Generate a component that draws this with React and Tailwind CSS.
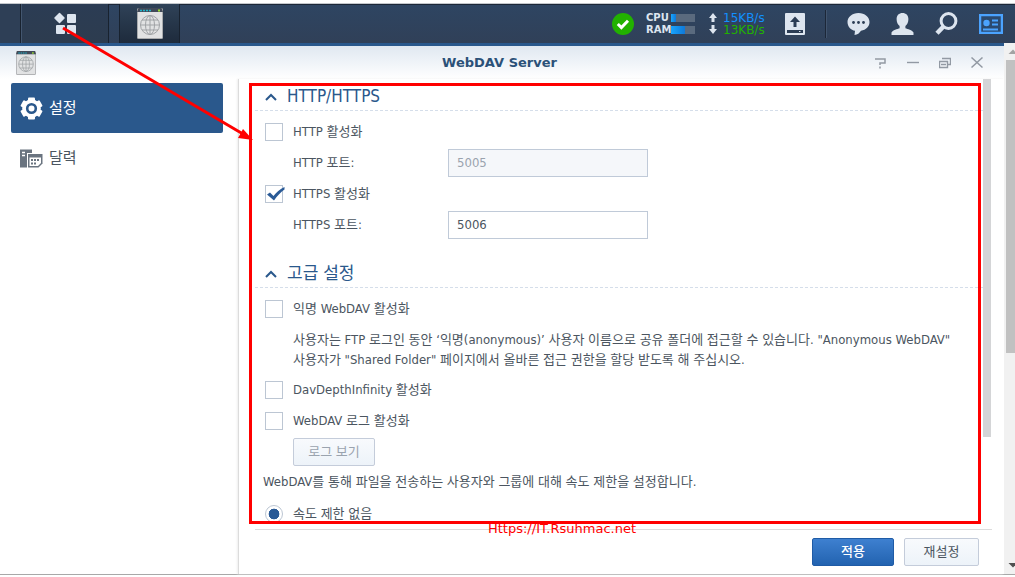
import React, { useState } from "react";

const App = () => {
  const [httpOn, setHttpOn] = useState(false);
  const [httpsOn, setHttpsOn] = useState(true);
  const [httpPort, setHttpPort] = useState("5005");
  const [httpsPort, setHttpsPort] = useState("5006");
  const [anonymous, setAnonymous] = useState(false);
  const [depthInfinity, setDepthInfinity] = useState(false);
  const [logOn, setLogOn] = useState(false);

  return (
    <div className="relative flex min-h-screen flex-col bg-white font-['DejaVu_Sans_Condensed','DejaVu_Sans','Noto_Sans_CJK_KR',sans-serif] text-[13px] text-[#4b5560]">
      <Taskbar />
      <div className="flex flex-1 border-b border-[#a8a8a8]">
        <div className="flex min-w-0 flex-1 flex-col border-t-3 border-[#2a588c]">
          <TitleBar />
          <div className="flex flex-1">
            <Sidebar />
            <main className="flex min-w-0 flex-1 flex-col border-l border-[#dcdcdc] pl-4 shadow-[-1px_0_2px_#eeeeee]">
              <div className="relative flex flex-1">
                <div className="min-w-0 flex-1 pt-1">
                  <Section title="HTTP/HTTPS">
                    <Check
                      label="HTTP 활성화"
                      checked={httpOn}
                      onChange={setHttpOn}
                    />
                    <Port
                      id="http-port"
                      label="HTTP 포트:"
                      value={httpPort}
                      onChange={setHttpPort}
                      disabled={!httpOn}
                    />
                    <Check
                      label="HTTPS 활성화"
                      checked={httpsOn}
                      onChange={setHttpsOn}
                    />
                    <Port
                      id="https-port"
                      label="HTTPS 포트:"
                      value={httpsPort}
                      onChange={setHttpsPort}
                      disabled={!httpsOn}
                    />
                  </Section>
                  <div className="h-5" />
                  <Section title="고급 설정">
                    <Check
                      label="익명 WebDAV 활성화"
                      checked={anonymous}
                      onChange={setAnonymous}
                    />
                    <p className="mt-1.5 mb-1 pr-3 pl-[38px] leading-5 break-keep">
                      사용자는 FTP 로그인 동안 ‘익명(anonymous)’ 사용자 이름으로
                      공유 폴더에 접근할 수 있습니다. "Anonymous WebDAV" 사용자가
                      "Shared Folder" 페이지에서 올바른 접근 권한을 할당 받도록 해
                      주십시오.
                    </p>
                    <Check
                      label="DavDepthInfinity 활성화"
                      checked={depthInfinity}
                      onChange={setDepthInfinity}
                    />
                    <Check
                      label="WebDAV 로그 활성화"
                      checked={logOn}
                      onChange={setLogOn}
                    />
                    <button
                      disabled={!logOn}
                      className="mt-0.5 ml-[38px] block h-7 w-[82px] rounded-xs border border-[#c4ccda] bg-linear-to-b from-[#f8fafd] to-[#edf3f9] text-[#4b5560] disabled:text-[#9aa3ae]"
                    >
                      로그 보기
                    </button>
                    <p className="pl-2 leading-8">
                      WebDAV를 통해 파일을 전송하는 사용자와 그룹에 대해 속도
                      제한을 설정합니다.
                    </p>
                    <label className="flex h-[31px] items-center gap-2.5 pl-2.5">
                      <input
                        type="radio"
                        name="speed"
                        defaultChecked
                        className="size-[18px] appearance-none rounded-full border border-[#bcc6d3] bg-white checked:bg-radial checked:from-[#2a5a96] checked:from-45% checked:to-white checked:to-50%"
                      />
                      속도 제한 없음
                    </label>
                  </Section>
                </div>
                <div className="mr-[13px] w-2">
                  <div className="h-[358px] bg-[#d4d5d7]" />
                </div>
                <span className="absolute -bottom-2.5 left-[233px] font-['DejaVu_Sans',sans-serif] text-[13px] leading-5 text-[#f00]">
                  Https://IT.Rsuhmac.net
                </span>
                <div className="pointer-events-none absolute top-1 -left-1.5 right-[23px] bottom-[5px] border-3 border-[#f00]" />
              </div>
              <footer className="mr-3 flex justify-end gap-2.5 border-t border-[#dcdcdc] py-2 pr-[13px]">
                <button className="h-7 w-[82px] rounded-xs border border-[#1f5ba6] bg-linear-to-b from-[#3e80d0] to-[#2263b0] font-medium text-white">
                  적용
                </button>
                <button className="h-7 w-[75px] rounded-xs border border-[#c4ccda] bg-linear-to-b from-[#f8fafd] to-[#edf3f9]">
                  재설정
                </button>
              </footer>
            </main>
          </div>
        </div>
        <PageScrollbar />
      </div>
      <div className="h-0.5" />
      <Arrow />
    </div>
  );
};

function Taskbar() {
  return (
    <header className="flex h-[43px] border-t-3 border-white bg-[#2f435f]">
      <div className="flex flex-1 border-t border-[#c4c8cd] bg-linear-to-b from-[#2e4562] to-[#304058] shadow-[inset_0_1px_#1c2738]">
        <div className="w-[21px] border-r border-[#18222f] bg-[#2e3f56]" />
        <button
          aria-label="메인 메뉴"
          className="flex w-[88px] items-center justify-center border-x border-[#43566f] border-r-[#18222f] bg-linear-to-b from-[#2b3c54] to-[#2d3c4f]"
        >
          <svg width="24" height="24" viewBox="0 0 24 24" fill="#dde5ef">
            <path
              d="M6.500 1.500 11 6 6.500 10.500 2 6Z"
              stroke="#dde5ef"
              strokeWidth="1.500"
              strokeLinejoin="round"
            />
            <rect x="14" y="2" width="9" height="9" rx="1" />
            <rect x="3" y="13" width="9" height="9" rx="1" />
            <rect x="14" y="13" width="9" height="9" rx="1" />
          </svg>
        </button>
        <div className="w-2.5" />
        <button
          aria-label="WebDAV"
          className="flex w-[61px] items-center justify-center border-x border-[#18222f] bg-linear-to-b from-[#2f4258] to-[#1e2b3c]"
        >
          <ServerIcon className="h-[31px] w-[26px]" />
        </button>
        <div className="flex flex-1 items-center justify-end pr-3">
          <svg width="22" height="22" viewBox="0 0 22 22">
            <circle cx="11" cy="11" r="11" fill="#22b100" />
            <path
              d="m5.8 11 3.6 3.6 6.6-6.8"
              fill="none"
              stroke="#fff"
              strokeWidth="3"
            />
          </svg>
          <div className="ml-3 w-[49px] font-['DejaVu_Sans',sans-serif] text-[10px] leading-3 font-bold text-[#dde5ef]">
            <Meter name="CPU" percent={20} />
            <Meter name="RAM" percent={58} />
          </div>
          <div className="ml-3.5 font-['DejaVu_Sans',sans-serif] text-xs leading-3">
            <div className="flex items-center gap-1.5 text-[#1290ff]">
              <SmallArrow />
              <span className="w-[43px]">15KB/s</span>
            </div>
            <div className="flex items-center gap-1.5 text-[#22b100]">
              <SmallArrow down />
              <span className="w-[43px]">13KB/s</span>
            </div>
          </div>
          <svg
            width="20"
            height="22"
            viewBox="0 0 20 22"
            className="ml-[19px]"
          >
            <rect width="20" height="22" rx="1" fill="#dde5ef" />
            <path
              d="M10 3.500 15 9h-3.500v5h-3V9H5ZM2 17h16v3H2Z"
              fill="#2b3c54"
            />
            <path d="M14 18h1.500v1H14z" fill="#dde5ef" />
          </svg>
          <div className="mx-5 h-7 w-0.5 border-l border-[#1c2738] bg-[#41546e]" />
          <div className="flex items-center gap-[21px]">
            <svg width="23" height="22" viewBox="0 0 23 22">
              <path
                d="M11.500 0C5.200 0 .5 4 .5 9s3.500 8 7.500 8.800L7.500 22c3 0 5-2 6.500-4.200 5-.8 8.500-4.300 8.500-8.800 0-5-4.700-9-11-9Z"
                fill="#dde5ef"
              />
              <g fill="#2b3c54">
                <circle cx="6.500" cy="9.500" r="1.400" />
                <circle cx="11.500" cy="9.500" r="1.400" />
                <circle cx="16.500" cy="9.500" r="1.400" />
              </g>
            </svg>
            <svg width="23" height="22" viewBox="0 0 23 22" fill="#dde5ef">
              <path d="M11.500 0C8 0 5.600 2.200 5.600 6c0 3.200 1.200 5.500 3 7v2.200c-2 1-7.100 1.600-8.100 4.300V22h22v-2.500c-1-2.700-6.100-3.300-8.100-4.300V13c1.800-1.500 3-3.800 3-7 0-3.800-2.400-6-5.900-6Z" />
            </svg>
            <svg
              width="23"
              height="23"
              viewBox="0 0 23 23"
              fill="none"
              stroke="#dde5ef"
            >
              <circle cx="13.500" cy="9" r="7.400" strokeWidth="3" />
              <path d="m8.500 14.500-6.500 6.700" strokeWidth="4.500" />
            </svg>
            <svg width="24" height="20" viewBox="0 0 24 20" fill="none">
              <rect
                x="1"
                y="1"
                width="22"
                height="18"
                fill="#2b4a70"
                stroke="#4ba3ff"
                strokeWidth="2.500"
              />
              <circle cx="7.500" cy="9" r="3.200" fill="#4ba3ff" />
              <path
                d="M13 6.500h6M13 10.500h6M4 15.500h15"
                stroke="#4ba3ff"
                strokeWidth="2"
              />
            </svg>
          </div>
        </div>
      </div>
    </header>
  );
}

function Meter({ name, percent }) {
  return (
    <div className="flex items-center">
      <span className="w-[25px]">{name}</span>
      <div className="h-2 flex-1 bg-[#5a6a7e]">
        <div
          className="h-full bg-linear-to-r from-[#19a5ff] to-[#0f78d8]"
          style={{ width: `${percent}%` }}
        />
      </div>
    </div>
  );
}

function SmallArrow({ down }) {
  return (
    <svg width="8" height="9" viewBox="0 0 8 9" fill="#dde5ef">
      {down ? (
        <path d="M2.500 0h3v4H8L4 9 0 4h2.500Z" />
      ) : (
        <path d="M2.500 9h3V5H8L4 0 0 5h2.500Z" />
      )}
    </svg>
  );
}

function ServerIcon({ className }) {
  return (
    <svg viewBox="0 0 26 31" className={className}>
      <rect width="26" height="31" rx="1.500" fill="#a9abad" />
      <rect x="1" y="4" width="24" height="26" fill="#e1e2e3" />
      <path d="M1.500 0h23L26 4H0Z" fill="#424a59" />
      <path
        d="M3 2.500h12"
        stroke="#1fb3c9"
        strokeWidth="1.500"
        strokeDasharray="2 1"
      />
      <rect x="21" y="1.500" width="2" height="2" fill="#9be22d" />
      <g fill="none" stroke="#a0a3a6">
        <circle cx="13" cy="17" r="9.500" />
        <ellipse cx="13" cy="17" rx="4.500" ry="9.500" />
        <path d="M13 7.500v19M3.500 17h19M5 12h16M5 22h16" />
      </g>
    </svg>
  );
}

function TitleBar() {
  return (
    <div className="flex h-[33px] items-center bg-linear-to-b from-[#e0e8f1] to-white pr-[21px] pl-4">
      <div className="flex-1">
        <ServerIcon className="h-6 w-5" />
      </div>
      <h1 className="font-['DejaVu_Sans',sans-serif] text-[13px] font-bold text-[#2b5178]">
        WebDAV Server
      </h1>
      <div className="flex flex-1 items-center justify-end gap-5 text-[#9299a3]">
        <button aria-label="도움말">
          <svg width="12" height="12" viewBox="0 0 12 12" className="block">
            <path
              d="M0 2h10v4H5v2M5 9.500v2"
              fill="none"
              stroke="currentColor"
              strokeWidth="1.500"
            />
          </svg>
        </button>
        <button aria-label="최소화">
          <svg width="12" height="12" viewBox="0 0 12 12" className="block">
            <path d="M0 5.500h12" stroke="currentColor" strokeWidth="1.400" />
          </svg>
        </button>
        <button aria-label="최대화">
          <svg width="12" height="12" viewBox="0 0 12 12" className="block">
            <path
              d="M3 1.500h9M11.500 1v6.500H9M0 4.500h9M.5 4v6.500h8V4M2 7.500h5"
              fill="none"
              stroke="currentColor"
              strokeWidth="1.400"
            />
          </svg>
        </button>
        <button aria-label="닫기">
          <svg width="12" height="12" viewBox="0 0 12 12" className="block">
            <path
              d="m.5 .5 11 10M11.500 .5 .5 10.500"
              stroke="currentColor"
              strokeWidth="1.500"
            />
          </svg>
        </button>
      </div>
    </div>
  );
}

function Sidebar() {
  return (
    <nav className="w-[238px] py-1 pr-[15px] pl-[11px] text-[15px]">
      <button className="flex h-[50px] w-full items-center gap-1.5 rounded-xs bg-[#2a588c] pl-2 text-white">
        <svg width="23" height="23" viewBox="0 0 23 23" className="ml-px">
          <g fill="#fff">
            <circle cx="11.500" cy="11.500" r="9.300" />
            <rect x="8" y="0.500" width="7" height="22" rx="1" />
            <rect
              x="8"
              y="0.500"
              width="7"
              height="22"
              rx="1"
              transform="rotate(60 11.500 11.500)"
            />
            <rect
              x="8"
              y="0.500"
              width="7"
              height="22"
              rx="1"
              transform="rotate(120 11.500 11.500)"
            />
          </g>
          <circle
            cx="11.500"
            cy="11.500"
            r="4.300"
            fill="#fff"
            stroke="#2a588c"
            strokeWidth="2.600"
          />
        </svg>
        설정
      </button>
      <button className="flex h-[50px] w-full items-center gap-1.5 pl-2">
        <svg width="23" height="19" viewBox="0 0 23 19" className="ml-px">
          <path d="M0 .5h12V4H7v14.500H0Z" fill="#6a7480" />
          <path d="M2 3.500h3M2 6.500h3" stroke="#fff" strokeWidth="1.600" />
          <path d="M8 5h14.500v9.500l-4 4H8Z" fill="#6a7480" />
          <path d="M9.500 8.500H21v5.500l-3 3H9.500Z" fill="#fff" />
          <path
            d="M11 11h8.500M11 14.500h5.500"
            stroke="#6a7480"
            strokeWidth="2"
            strokeDasharray="2 1"
          />
        </svg>
        달력
      </button>
    </nav>
  );
}

function Section({ title, children }) {
  const [open, setOpen] = useState(true);

  return (
    <section>
      <h2 className="border-b border-dashed border-[#d5deea]">
        <button
          onClick={() => setOpen(!open)}
          className="flex h-[27px] w-full items-center gap-2.5 pl-2.5 text-[17px] text-[#2a588c]"
        >
          <svg width="12" height="8" viewBox="0 0 12 8">
            <path
              d="m1 7 5-5 5 5"
              fill="none"
              stroke="currentColor"
              strokeWidth="2"
            />
          </svg>
          {title}
        </button>
      </h2>
      {open && <div className="pt-[5px]">{children}</div>}
    </section>
  );
}

function Check({ label, checked, onChange }) {
  return (
    <label className="flex h-[31px] items-center gap-2.5 pl-2.5">
      <span className="relative size-[18px]">
        <input
          type="checkbox"
          checked={checked}
          onChange={(e) => onChange(e.target.checked)}
          className="block size-[18px] appearance-none border border-[#bcc6d3] bg-white"
        />
        {checked && (
          <svg
            width="20"
            height="18"
            viewBox="0 0 20 18"
            className="pointer-events-none absolute top-0 left-0"
          >
            <path
              d="M2 9.500 5 7.500 8.500 11C11 7.500 15 4 19.500 2v2.500C15.500 7.500 12 11 9 15.500Z"
              fill="#2a5a96"
            />
          </svg>
        )}
      </span>
      {label}
    </label>
  );
}

function Port({ id, label, value, onChange, disabled }) {
  return (
    <div className="flex h-[31px] items-center pl-[38px]">
      <label htmlFor={id} className="w-[155px]">
        {label}
      </label>
      <input
        id={id}
        type="text"
        value={value}
        disabled={disabled}
        onChange={(e) => onChange(e.target.value)}
        className="h-7 w-[200px] border border-[#c0cad8] bg-white px-2 outline-none disabled:bg-[#f5f7fa] disabled:text-[#9aa3ae]"
      />
    </div>
  );
}

function PageScrollbar() {
  return (
    <div className="flex w-[11px] flex-col justify-between bg-[#f1f1f1] pl-0.5">
      <div>
        <svg width="9" height="17" viewBox="0 0 9 17" className="block">
          <path d="M2.500 11 7 6.500 11.500 11Z" fill="#a3a3a3" />
        </svg>
        <div className="h-[293px] bg-[#c1c1c1]" />
      </div>
      <svg width="9" height="17" viewBox="0 0 9 17" className="block">
        <path d="M2.500 6 7 10.500 11.500 6Z" fill="#505050" />
      </svg>
    </div>
  );
}

// Points from the main menu button to the settings panel
function Arrow() {
  return (
    <svg
      width="260"
      height="150"
      viewBox="0 0 260 150"
      className="pointer-events-none absolute top-0 left-0"
    >
      <path d="m63 28 180 106" stroke="#f00" strokeWidth="3" />
      <path d="m253 140-15-2 5-9Z" fill="#f00" />
    </svg>
  );
}

export default App;
